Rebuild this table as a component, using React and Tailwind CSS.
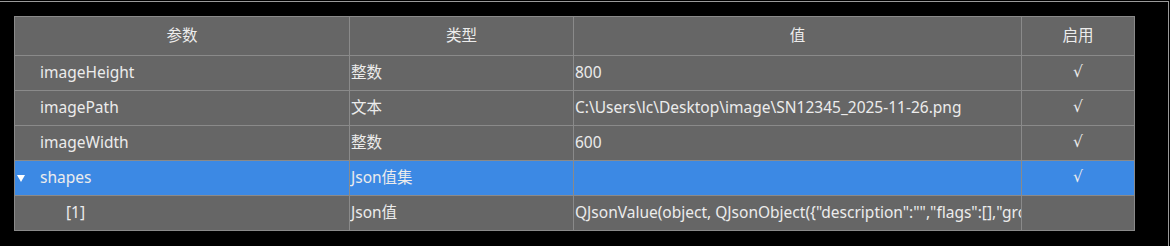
import React from "react";

const rows = [
  { name: "imageHeight", type: "整数", value: "800", on: true },
  { name: "imagePath", type: "文本", value: "C:\\Users\\lc\\Desktop\\image\\SN12345_2025-11-26.png", on: true },
  { name: "imageWidth", type: "整数", value: "600", on: true },
  { name: "shapes", type: "Json值集", value: "", on: true, open: true, selected: true },
  {
    name: "[1]",
    type: "Json值",
    value: 'QJsonValue(object, QJsonObject({"description":"","flags":[],"group_id":null,"label":"rect"}))',
    on: false,
    child: true,
  },
];

const cols = "grid grid-cols-[335px_224px_448px_113px]";
const cell = "border-r border-b border-[#8a8a8a] flex items-center overflow-hidden whitespace-nowrap";

const App = () => {
  return (
    <div className="w-[1170px] h-[246px] bg-black pt-px overflow-hidden text-[#ececec] text-[15.5px] font-['Noto_Sans','Noto_Sans_CJK_SC',sans-serif]">
      <div className="w-[1169px] h-[245px] border-t border-r border-[#9a9a9a] pl-[14px] pt-[14px]">
        <div className="w-[1121px] border-l border-t border-[#8a8a8a] bg-[#666666]">
          {/* 表头 */}
          <div className={`${cols} h-[39px]`}>
            <div className={`${cell} justify-center`}>参数</div>
            <div className={`${cell} justify-center`}>类型</div>
            <div className={`${cell} justify-center`}>值</div>
            <div className={`${cell} justify-center`}>启用</div>
          </div>

          {rows.map((r) => (
            <div key={r.name} className={`${cols} h-[35px] ${r.selected ? "bg-[#3c89e4]" : ""}`}>
              <div className={`${cell} relative ${r.child ? "pl-[51px]" : "pl-[25px]"}`}>
                {r.open && (
                  <svg className="absolute left-[2px] top-[14px]" width="8" height="7" viewBox="0 0 8 7">
                    <path d="M0 0 L8 0 L4 7 Z" fill="#ffffff" />
                  </svg>
                )}
                {r.name}
              </div>
              <div className={`${cell} pl-px`}>{r.type}</div>
              <div className={`${cell} pl-px`}>{r.value}</div>
              <div className={`${cell} justify-center font-['DejaVu_Sans',sans-serif]`}>{r.on ? "√" : ""}</div>
            </div>
          ))}
        </div>
      </div>
    </div>
  );
};

export default App;
